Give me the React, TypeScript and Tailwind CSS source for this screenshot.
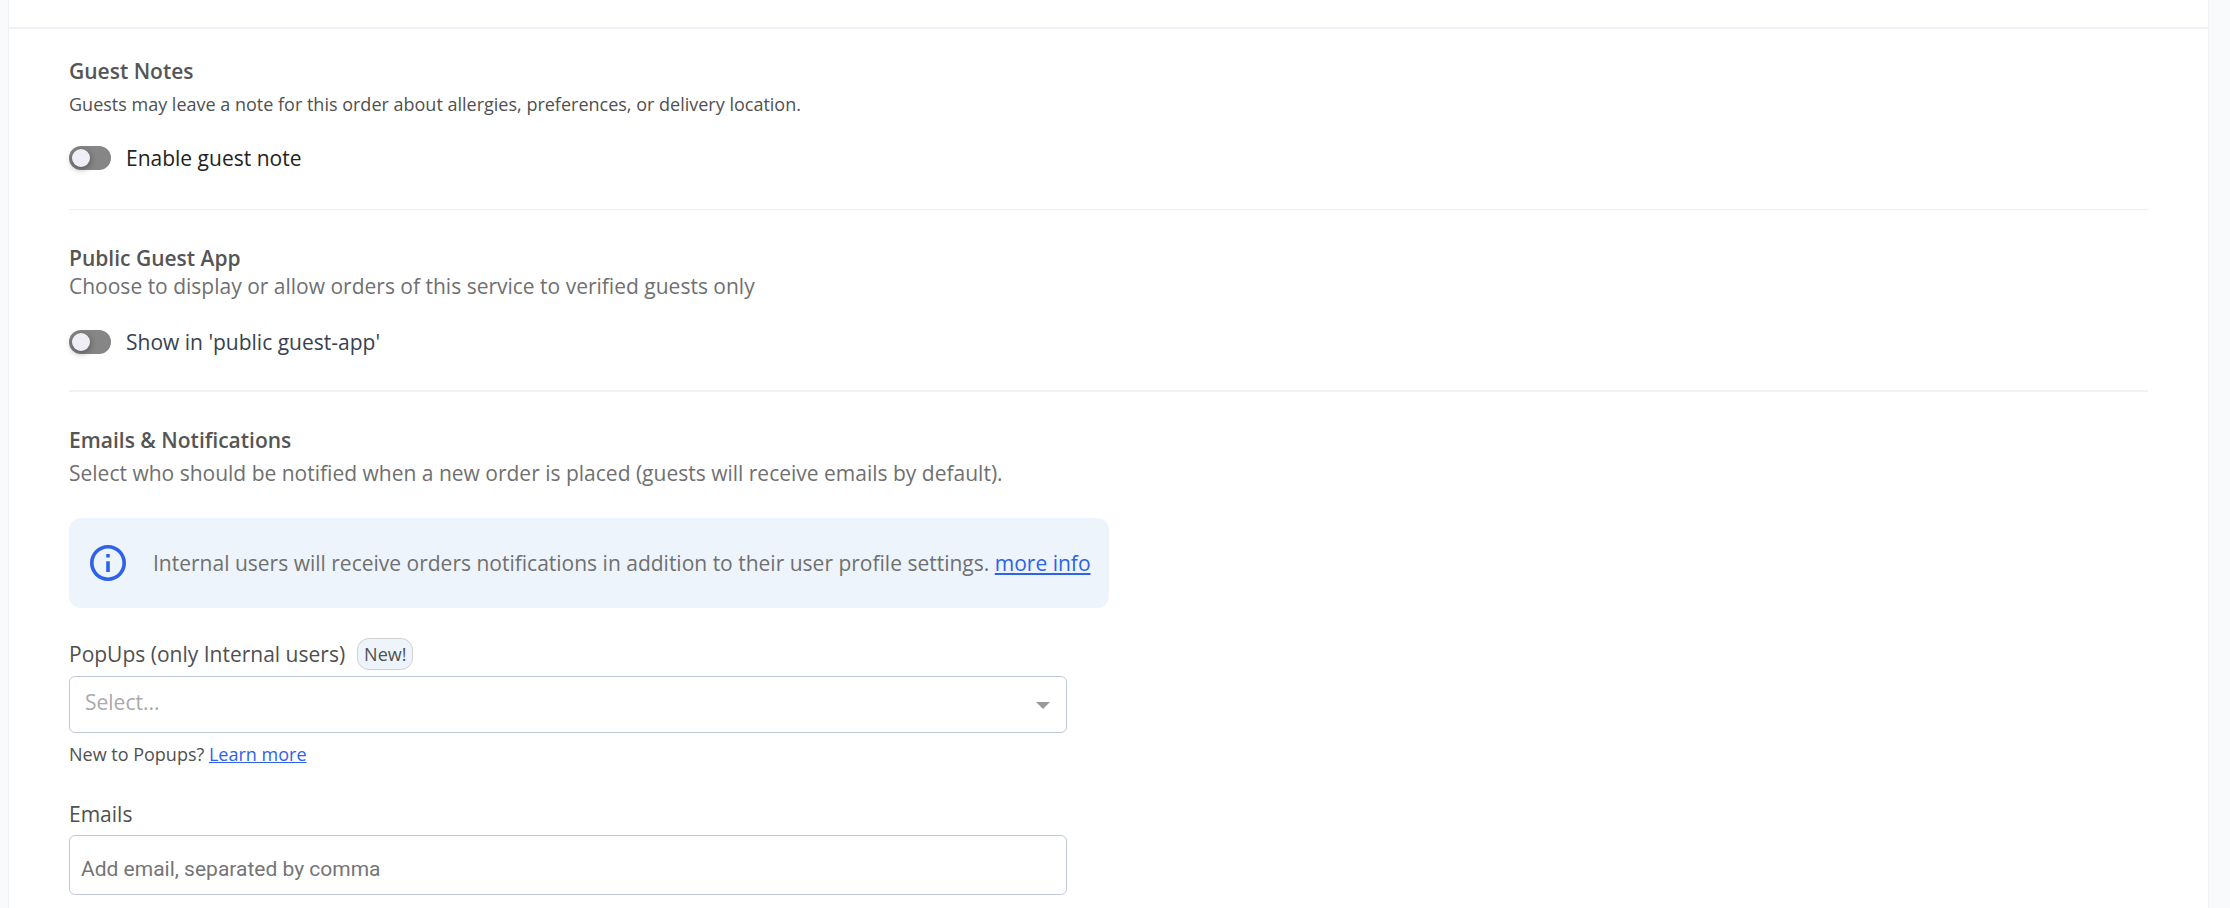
import React, { useState } from "react";

type ToggleProps = {
  id: string;
  label: string;
  labelClassName: string;
};

const Toggle = ({ id, label, labelClassName }: ToggleProps) => {
  const [checked, setChecked] = useState(false);

  return (
    <div className="flex items-center gap-[15px] h-7">
      <input
        id={id}
        type="checkbox"
        role="switch"
        checked={checked}
        onChange={(e) => setChecked(e.target.checked)}
        className="appearance-none shrink-0 w-[42px] h-6 rounded-full bg-[#868686] checked:bg-[#2f62ea] p-[3px] cursor-pointer transition-colors before:block before:size-[18px] before:rounded-full before:bg-[#efeef6] before:shadow-[0_2px_6px_1px_rgba(0,0,0,0.3)] before:transition-transform checked:before:translate-x-[18px]"
      />
      <label htmlFor={id} className={`text-[21px] leading-7 ${labelClassName}`}>
        {label}
      </label>
    </div>
  );
};

const SectionTitle = ({ children }: { children: React.ReactNode }) => (
  <h2 className="text-[21px] leading-7 font-semibold text-[#555]">
    {children}
  </h2>
);

const InfoIcon = () => (
  <svg
    className="size-9 shrink-0"
    viewBox="2 2 20 20"
    fill="#2f62ea"
    aria-hidden="true"
  >
    <path d="M11 7h2v2h-2zm0 4h2v6h-2zm1-9C6.48 2 2 6.48 2 12s4.48 10 10 10 10-4.48 10-10S17.52 2 12 2zm0 18c-4.41 0-8-3.59-8-8s3.59-8 8-8 8 3.59 8 8-3.59 8-8 8z" />
  </svg>
);

const App = () => {
  const [emails, setEmails] = useState("");

  return (
    <div className="min-h-screen bg-[#f9fafc] pl-2 pr-[21px] font-['Open_Sans',sans-serif]">
      <main className="min-h-screen bg-white border-x border-[#f0f1f5]">
        {/* Bottom edge of the previous panel */}
        <div className="h-[29px] border-b-2 border-[#f0f0f6]" />

        <div className="px-[60px] pt-7 pb-3">
          <section className="pb-[37px] border-b border-[#f0f0f1]">
            <SectionTitle>Guest Notes</SectionTitle>
            <p className="mt-[5px] mb-[26px] text-lg leading-7 text-[#505050]">
              Guests may leave a note for this order about allergies,
              preferences, or delivery location.
            </p>
            <Toggle
              id="guest-note"
              label="Enable guest note"
              labelClassName="text-[#222]"
            />
          </section>

          <section className="pt-[34px] pb-[34px] border-b-2 border-[#f0f0f6]">
            <SectionTitle>Public Guest App</SectionTitle>
            <p className="mb-7 text-[21px] leading-7 text-[#707070]">
              Choose to display or allow orders of this service to verified
              guests only
            </p>
            <Toggle
              id="public-guest-app"
              label="Show in 'public guest-app'"
              labelClassName="text-[#374151]"
            />
          </section>

          <section className="pt-[34px]">
            <SectionTitle>Emails &amp; Notifications</SectionTitle>
            <p className="mt-[5px] text-[21px] leading-7 text-[#707070]">
              Select who should be notified when a new order is placed (guests
              will receive emails by default).
            </p>

            <div className="mt-[31px] flex items-center gap-[27px] w-fit min-h-[90px] pl-[21px] pr-[18px] rounded-xl bg-[#edf4fc]">
              <InfoIcon />
              <p className="text-[21px] leading-7 text-[#707070]">
                Internal users will receive orders notifications in addition to
                their user profile settings.{" "}
                <a href="#more-info" className="text-[#2f62ea] underline">
                  more info
                </a>
              </p>
            </div>

            <div className="w-[48%]">
              <div className="mt-[30px] flex items-center gap-3 h-8">
                <label
                  htmlFor="popups"
                  className="text-[21px] leading-7 text-[#505050]"
                >
                  PopUps (only Internal users)
                </label>
                <span className="px-1.5 h-8 border border-[#d0d0d0] rounded-xl bg-[#edf4fc] text-lg leading-[30px] text-[#505050]">
                  New!
                </span>
              </div>
              <div className="relative mt-1.5">
                <select
                  id="popups"
                  defaultValue=""
                  className="appearance-none block w-full h-[57px] pl-[15px] pr-12 pb-1.5 border border-[#c0c9d8] rounded-md bg-white text-[21px] leading-7 text-[#aaa]"
                >
                  <option value="">Select...</option>
                </select>
                <svg
                  className="absolute right-[17px] top-[26px] w-3.5 h-[7px] pointer-events-none"
                  viewBox="0 0 14 7"
                  fill="#999"
                  aria-hidden="true"
                >
                  <path d="M0 0h14L7 7z" />
                </svg>
              </div>
              <p className="mt-[7px] text-lg leading-7 text-[#505050]">
                New to Popups?{" "}
                <a href="#popups-help" className="text-[#2f62ea] underline">
                  Learn more
                </a>
              </p>

              <label
                htmlFor="emails"
                className="mt-8 block w-fit text-[21px] leading-7 text-[#505050]"
              >
                Emails
              </label>
              <input
                id="emails"
                type="text"
                value={emails}
                onChange={(e) => setEmails(e.target.value)}
                placeholder="Add email, separated by comma"
                className="mt-[7px] block w-full h-[60px] px-[11px] pt-2 border border-[#c0c9d8] rounded-md bg-white font-[Roboto,sans-serif] text-[21px] text-[#505050] placeholder:text-[#757575]"
              />
            </div>
          </section>
        </div>
      </main>
    </div>
  );
};

export default App;
